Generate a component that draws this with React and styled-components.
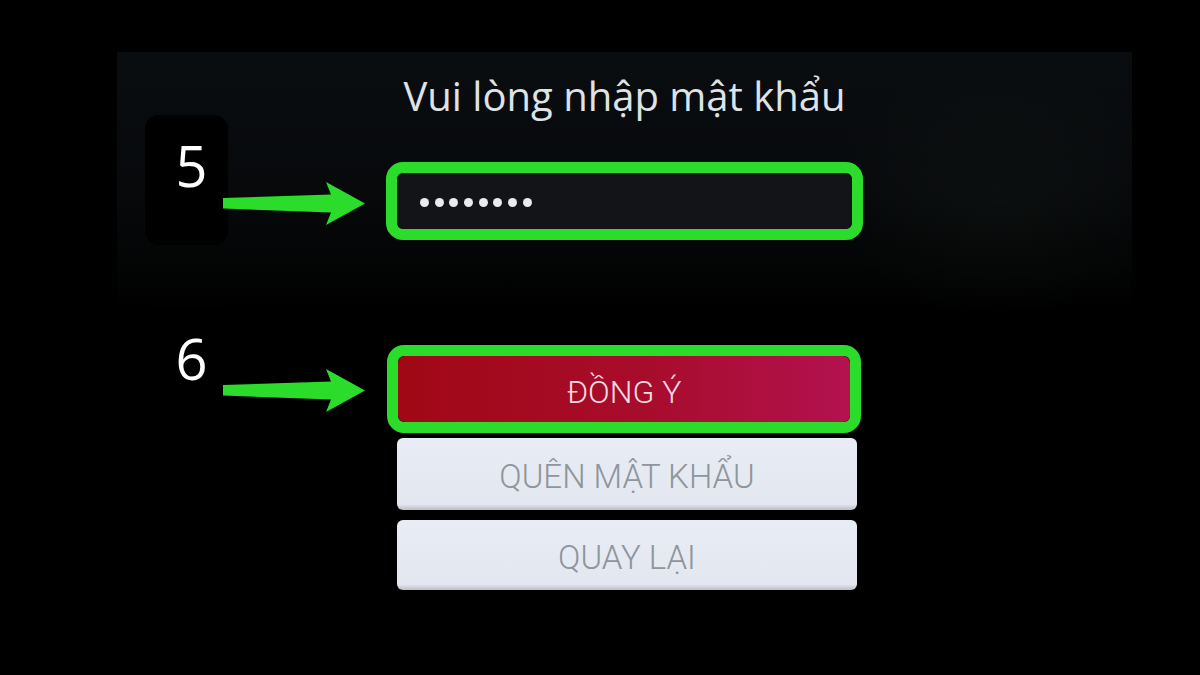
import styled, { createGlobalStyle } from "styled-components"

const GlobalStyle = createGlobalStyle`
    html, body {
        margin: 0;
        background: #000;
    }
    body {
        font-family: "Open Sans", "Noto Sans", sans-serif;
    }
`

const Page = styled.div`
    width: 1200px;
    height: 675px;
    padding: 52px 0 0 117px;
    box-sizing: border-box;
    background: #000;
    overflow: hidden;
`

const Screen = styled.div`
    width: 1015px;
    height: 560px;
    padding-top: 20px;
    box-sizing: border-box;
    background:
        radial-gradient(ellipse 240px 180px at 880px 140px, rgba(18, 22, 20, 0.45), transparent 70%),
        linear-gradient(180deg, #0a0d10 0%, #07090b 25%, #030404 38%, #000 47%);
`

const Row = styled.div`
    display: grid;
    grid-template-columns: 269px 477px;
    margin-top: ${(p) => p.$gap || 0}px;
`

const Title = styled.h1`
    grid-column: 2;
    margin: 0;
    text-align: center;
    font-family: "Open Sans", "Noto Sans", sans-serif;
    font-weight: 500;
    font-size: 40px;
    line-height: 48px;
    color: #dfe3e6;
`

const Step = styled.div`
    display: flex;
    align-items: flex-start;
    height: 0;
`

const StepBadge = styled.div`
    flex-shrink: 0;
    width: 83px;
    height: 130px;
    margin: ${(p) => p.$top}px 0 0 28px;
    padding: 22px 0 0 10px;
    box-sizing: border-box;
    border-radius: 14px;
    background: #000;
    text-align: center;
    font-family: "Open Sans", sans-serif;
    font-size: 56px;
    line-height: 56px;
    color: #fff;
`

const ArrowMark = styled.svg`
    flex-shrink: 0;
    margin: ${(p) => p.$top}px 0 0 -5px;
`

const Highlight = styled.div`
    border: 11px solid #2bdc2b;
    border-radius: 17px;
    margin-left: ${(p) => p.$inset || 0}px;
    width: ${(p) => p.$width}px;
    box-sizing: border-box;
`

const PasswordBox = styled.div`
    height: 56px;
    display: flex;
    align-items: center;
    gap: 5.7px;
    padding: 3px 0 0 23px;
    box-sizing: border-box;
    border-radius: 7px;
    background: #121417;
`

const Dot = styled.span`
    width: 9px;
    height: 9px;
    border-radius: 50%;
    background: #e9ecef;
`

const MenuButton = styled.button`
    display: flex;
    align-items: center;
    justify-content: center;
    width: ${(p) => (p.$primary ? "100%" : "460px")};
    height: ${(p) => p.$height}px;
    margin-left: ${(p) => (p.$primary ? 0 : 11)}px;
    padding: 5px 0 0;
    border: none;
    border-radius: ${(p) => (p.$primary ? 7 : 6)}px;
    background: ${(p) =>
        p.$primary
            ? "linear-gradient(90deg, #a10815 0%, #a80c2c 55%, #b3124f 100%)"
            : "linear-gradient(180deg, #e8edf5 0%, #e3e8f0 92%, #b9bec6 100%)"};
    color: ${(p) => (p.$primary ? "#f4dbe3" : "#8f959c")};
    font-family: Roboto, "Liberation Sans", sans-serif;
    font-weight: 300;
    font-size: ${(p) => (p.$primary ? 32 : 33)}px;
    cursor: pointer;
`

function Arrow({ top }) {
    return (
        <ArrowMark $top={top} width="142" height="43" viewBox="0 0 142 43">
            <path d="M0 16 L108 12.5 L103 0 L142 21.5 L103 43 L108 30.5 L0 26.5 Z" fill="#2bdc2b" />
        </ArrowMark>
    )
}

function App() {
    return (
        <>
            <GlobalStyle />
            <Page>
                <Screen>
                    <Row>
                        <Title>Vui lòng nhập mật khẩu</Title>
                    </Row>

                    <Row $gap={42}>
                        <Step>
                            <StepBadge $top={-47}>5</StepBadge>
                            <Arrow top={20} />
                        </Step>
                        <Highlight $width={477}>
                            <PasswordBox>
                                {Array.from({ length: 8 }).map((_, i) => (
                                    <Dot key={i} />
                                ))}
                            </PasswordBox>
                        </Highlight>
                    </Row>

                    <Row $gap={105}>
                        <Step>
                            <StepBadge $top={-37}>6</StepBadge>
                            <Arrow top={24} />
                        </Step>
                        <Highlight $width={474} $inset={1}>
                            <MenuButton $primary $height={66}>ĐỒNG Ý</MenuButton>
                        </Highlight>
                    </Row>

                    <Row $gap={5}>
                        <div />
                        <MenuButton $height={72}>QUÊN MẬT KHẨU</MenuButton>
                    </Row>

                    <Row $gap={10}>
                        <div />
                        <MenuButton $height={70}>QUAY LẠI</MenuButton>
                    </Row>
                </Screen>
            </Page>
        </>
    )
}

export default App
